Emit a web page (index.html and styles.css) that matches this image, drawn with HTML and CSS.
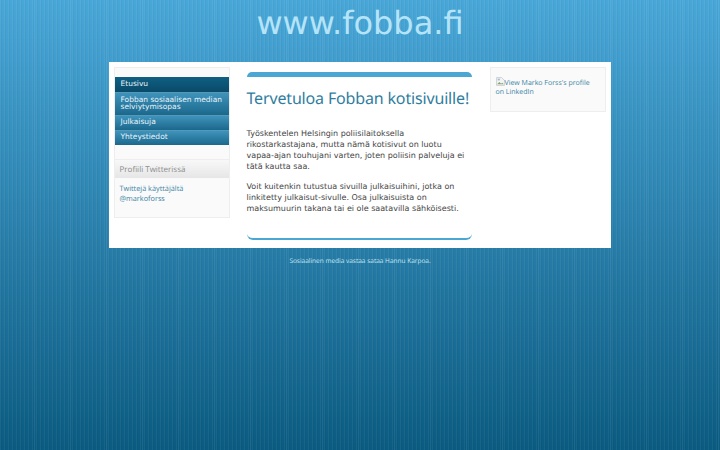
FILE: index.html
```html
<!DOCTYPE html>
<html lang="fi">
<head>
<meta charset="utf-8">
<title>www.fobba.fi</title>
<link rel="stylesheet" href="styles.css">
</head>
<body>
<header class="site-title">www.fobba.fi</header>
<div class="page">
  <aside class="left">
    <ul class="menu">
      <li class="menu-item current">Etusivu</li>
      <li class="menu-item">Fobban sosiaalisen median selviytymisopas</li>
      <li class="menu-item">Julkaisuja</li>
      <li class="menu-item">Yhteystiedot</li>
    </ul>
    <h3 class="widget-title">Profiili Twitterissä</h3>
    <div class="widget-body"><a class="link" href="#">Twittejä käyttäjältä @markoforss</a></div>
  </aside>
  <main class="content">
    <div class="cap-top"></div>
    <h1 class="heading">Tervetuloa Fobban kotisivuille!</h1>
    <p class="para first">Työskentelen Helsingin poliisilaitoksella rikostarkastajana, mutta nämä kotisivut on luotu vapaa-ajan touhujani varten, joten poliisin palveluja ei tätä kautta saa.</p>
    <p class="para">Voit kuitenkin tutustua sivuilla julkaisuihini, jotka on linkitetty julkaisut-sivulle. Osa julkaisuista on maksumuurin takana tai ei ole saatavilla sähköisesti.</p>
    <div class="cap-bottom"></div>
  </main>
  <aside class="right">
    <a class="link" href="#"><svg class="broken" viewBox="0 0 16 16"><path d="M1 1h9l5 5v9H1z" fill="#f4f4f4" stroke="#b5b5b5"/><path d="M2 13l4-4 3 3 2-2 3 3z" fill="#7fa86f"/><path d="M3 3h4v3H3z" fill="#9dbde0"/></svg>View Marko Forss's profile on LinkedIn</a>
  </aside>
</div>
<footer class="foot">Sosiaalinen media vastaa sataa Hannu Karpoa.</footer>
</body>
</html>
```

FILE: styles.css
```css
* { box-sizing: border-box; }
html, body { margin: 0; padding: 0; }
body {
  height: 450px;
  overflow: hidden;
  display: flex;
  flex-direction: column;
  align-items: center;
  font-family: "DejaVu Sans", sans-serif;
  text-rendering: geometricPrecision;
  background-color: #1d7199;
  background-image:
    repeating-linear-gradient(90deg, rgba(255,255,255,0) 0 34px, rgba(255,255,255,0.07) 34px 35px, rgba(255,255,255,0) 35px 36px),
    repeating-linear-gradient(90deg, rgba(255,255,255,0.05) 0 1px, rgba(0,0,0,0.03) 1px 2px, rgba(255,255,255,0) 2px 4px),
    linear-gradient(180deg, #49a7d8 0%, #0b5b81 100%);
}
.site-title {
  height: 62px;
  font-size: 32px;
  line-height: 46px;
  color: #b5e4f8;
  text-align: center;
}
.page {
  width: 502px;
  height: 186px;
  margin-right: 1px;
  background: #fff;
  display: flex;
  align-items: flex-start;
  padding: 5px 5px 0;
}
.left {
  flex: none;
  width: 116px;
  height: 151px;
  background: #fafafa;
  border: 1px solid #eee;
  padding-top: 9px;
}
.menu { list-style: none; margin: 0; padding: 0; }
.menu-item {
  padding: 2.5px 6px 4px;
  font-size: 7.5px;
  line-height: 7.5px;
  color: #e6f3f9;
  background: linear-gradient(180deg, #3f93bb, #1b688c);
  border-top: 1px solid #5599b8;
}
.menu-item.current {
  padding: 3.25px 6px 4.25px;
  background: linear-gradient(180deg, #0e5f83, #0a4a69);
  border-top: 0;
}
.widget-title {
  margin: 14.5px 0 0;
  height: 19px;
  padding: 0 5px;
  font-family: "Open Sans", sans-serif;
  font-size: 8px;
  font-weight: normal;
  line-height: 19px;
  color: #8a8a8a;
  background: linear-gradient(180deg, #f8f8f8, #e6e6e6);
  border-top: 1px solid #eee;
}
.widget-body { padding: 6px 5px 5px; font-family: "Open Sans", sans-serif; font-size: 7.3px; line-height: 10px; }
.link { color: #3a84a3; text-decoration: none; }
.content { flex: none; width: 225px; margin-left: 17px; padding-top: 4.5px; }
.cap-top { height: 5px; background: #4aa7d3; border-radius: 5px 5px 0 0; }
.heading {
  margin: 9px 0 0;
  font-family: "Noto Sans", sans-serif;
  font-size: 16px;
  font-weight: normal;
  line-height: 24px;
  letter-spacing: -0.16px;
  color: #2f7d9e;
  white-space: nowrap;
}
.para { margin: 9px 0 0; font-size: 8px; line-height: 11px; color: #444; }
.para.first { margin-top: 18px; }
.cap-bottom {
  height: 7px;
  margin-top: 19.5px;
  border-bottom: 2px solid #4aa7d3;
  border-radius: 0 0 6px 6px;
}
.right {
  flex: none;
  width: 116px;
  height: 45px;
  margin-left: 18px;
  padding: 8.5px 5px;
  background: #fafafa;
  border: 1px solid #eee;
  font-family: "Open Sans", sans-serif;
  font-size: 7px;
  line-height: 9.5px;
}
.broken { width: 9px; height: 9px; vertical-align: -1px; }
.foot {
  margin-top: 8px;
  font-family: "Open Sans", sans-serif;
  font-size: 6.5px;
  line-height: 10px;
  color: #cbe8f3;
}
```
